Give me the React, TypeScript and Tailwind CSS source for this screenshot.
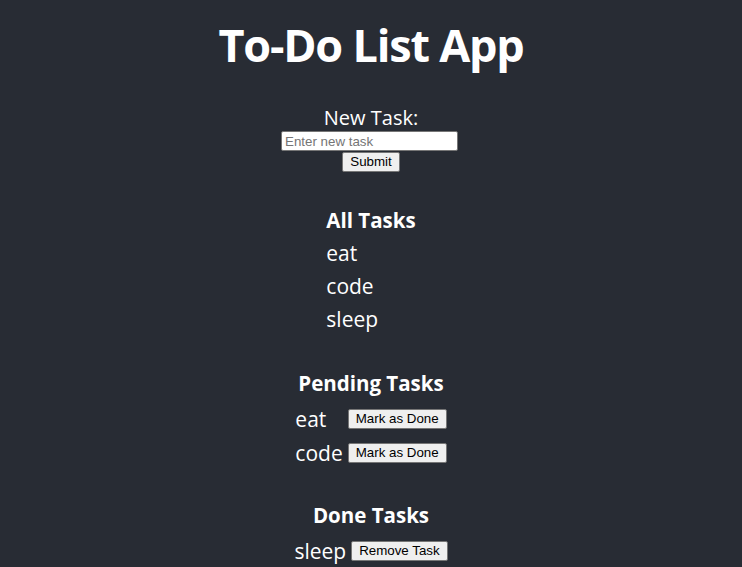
const allTasks = ['eat', 'code', 'sleep'];
const pending = ['eat', 'code'];
const done = ['sleep'];

const btn =
  "rounded-[2px] border border-[#767676] bg-[#efefef] px-[7px] h-[20px] text-[13.33px] leading-[16px] text-black font-['Liberation_Sans',Arial,sans-serif]";

export default function App() {
  return (
    <div className="min-h-[567px] bg-[#282c34] text-white font-['Open_Sans','Noto_Sans',sans-serif] flex flex-col items-center">
      <h1 className="mt-[21px] text-[45px] leading-[48px] font-bold tracking-[-1.2px]">To-Do List App</h1>

      {/* new task form */}
      <div className="mt-[37px] text-[20px] leading-[24px]">New Task:</div>
      <input
        placeholder="Enter new task"
        className="mt-[1px] mr-[3px] w-[177px] h-[20px] rounded-[2px] border border-[#767676] bg-white px-[3px] text-[13.33px] text-black placeholder:text-[#757575] font-['Liberation_Sans',Arial,sans-serif]"
      />
      <button className={`mt-[1px] ${btn}`}>Submit</button>

      {/* all tasks */}
      <div className="mt-[34px] flex flex-col items-start">
        <h2 className="text-[20.5px] leading-[28px] font-bold">All Tasks</h2>
        <ul className="mt-[3px]">
          {allTasks.map((t) => (
            <li key={t} className="text-[21px] leading-[33px]">{t}</li>
          ))}
        </ul>
      </div>

      {/* pending */}
      <h2 className="mt-[33px] text-[20.5px] leading-[28px] font-bold">Pending Tasks</h2>
      <div className="mt-[5px] grid grid-cols-[auto_auto] gap-x-[5px]">
        {pending.map((t) => (
          <div key={t} className="contents">
            <span className="text-[21px] leading-[34px]">{t}</span>
            <div className="flex items-center h-[34px]">
              <button className={btn}>Mark as Done</button>
            </div>
          </div>
        ))}
      </div>

      {/* done */}
      <h2 className="mt-[31px] text-[20.5px] leading-[28px] font-bold">Done Tasks</h2>
      {done.map((t) => (
        <div key={t} className="mt-[5px] flex items-center gap-[5px] h-[34px]">
          <span className="text-[21px] leading-[34px]">{t}</span>
          <button className={btn}>Remove Task</button>
        </div>
      ))}
    </div>
  );
}
